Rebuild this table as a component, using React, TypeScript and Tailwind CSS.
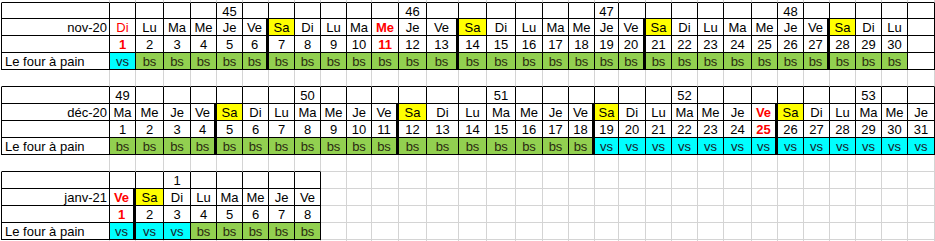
import React from 'react';

// Planning four à pain – nov 2020 / déc 2020 / janv 2021, rendu façon feuille Excel

const JOURS = ['Lu', 'Ma', 'Me', 'Je', 'Ve', 'Sa', 'Di'];

type Kind = 'blank' | 'week' | 'day' | 'num' | 'bs';

type Bloc = {
  mois: string;
  debut: number; // index dans JOURS du 1er du mois
  jours: number;
  span: number; // nb de colonnes après la colonne A
  semaines: Record<number, string>;
  rouges: number[];
  rougeFin?: number[]; // jour en rouge mais pas en gras (ligne des jours)
  statut: (d: number) => 'bs' | 'vs';
};

const NOV: Bloc = {
  mois: 'nov-20',
  debut: 6,
  jours: 30,
  span: 31,
  semaines: { 5: '45', 12: '46', 19: '47', 26: '48' },
  rouges: [1, 11],
  rougeFin: [1],
  statut: (d) => (d === 1 ? 'vs' : 'bs'),
};

const DEC: Bloc = {
  mois: 'déc-20',
  debut: 1,
  jours: 31,
  span: 31,
  semaines: { 1: '49', 8: '50', 15: '51', 22: '52', 29: '53' },
  rouges: [25],
  statut: (d) => (d <= 18 ? 'bs' : 'vs'),
};

const JAN: Bloc = {
  mois: 'janv-21',
  debut: 4,
  jours: 8,
  span: 8,
  semaines: { 3: '1' },
  rouges: [1],
  statut: (d) => (d <= 3 ? 'vs' : 'bs'),
};

type Ligne = { kind: Kind; bloc?: Bloc };

const LIGNES: Ligne[] = [
  { kind: 'blank' },
  { kind: 'week', bloc: NOV },
  { kind: 'day', bloc: NOV },
  { kind: 'num', bloc: NOV },
  { kind: 'bs', bloc: NOV },
  { kind: 'blank' },
  { kind: 'week', bloc: DEC },
  { kind: 'day', bloc: DEC },
  { kind: 'num', bloc: DEC },
  { kind: 'bs', bloc: DEC },
  { kind: 'blank' },
  { kind: 'week', bloc: JAN },
  { kind: 'day', bloc: JAN },
  { kind: 'num', bloc: JAN },
  { kind: 'bs', bloc: JAN },
  { kind: 'blank' },
];

const NB_COLS = 32;

const jourDe = (b: Bloc, c: number) => JOURS[(b.debut + c - 1) % 7];

const dansTable = (r: number, c: number) => {
  const l = LIGNES[r];
  return !!l && !!l.bloc && c <= l.bloc.span;
};

function Cellule({ r, c }: { r: number; c: number }) {
  const ligne = LIGNES[r];
  const b = ligne.bloc;
  const ici = dansTable(r, c);

  // bordures : chaque cellule dessine sa droite et son bas
  const epais =
    !!b &&
    ligne.kind !== 'week' &&
    c + 1 <= b.span &&
    c + 1 <= b.jours &&
    jourDe(b, c + 1) === 'Sa' &&
    c >= 1;
  const droiteNoire = ici || dansTable(r, c + 1);
  const basNoir = ici || dansTable(r + 1, c);

  const droite = epais
    ? 'border-r-[3px] border-r-black'
    : droiteNoire
      ? 'border-r border-r-black'
      : 'border-r border-r-[#d4d4d4]';
  const bas = basNoir ? 'border-b border-b-black' : 'border-b border-b-[#d4d4d4]';
  const gauche = c === 0 ? (ici ? 'border-l border-l-black' : 'border-l border-l-transparent') : '';

  let texte = '';
  let fond = 'bg-white';
  let couleur = 'text-black';
  let gras = '';
  let align = 'justify-center';

  if (b && ici) {
    const d = c;
    const jourValide = c >= 1 && d <= b.jours;
    if (c === 0) {
      if (ligne.kind === 'day') {
        texte = b.mois;
        align = 'justify-end pr-[2px]';
      } else if (ligne.kind === 'bs') {
        texte = 'Le four à pain';
        align = 'justify-start pl-[3px]';
      }
    } else if (jourValide) {
      const rouge = b.rouges.includes(d);
      if (ligne.kind === 'week') {
        texte = b.semaines[c] ?? '';
      } else if (ligne.kind === 'day') {
        texte = jourDe(b, c);
        if (texte === 'Sa') fond = 'bg-[#ffff00]';
        if (rouge) {
          couleur = 'text-[#ff0000]';
          if (!b.rougeFin?.includes(d)) gras = 'font-bold';
        }
      } else if (ligne.kind === 'num') {
        texte = String(d);
        if (rouge) {
          couleur = 'text-[#ff0000]';
          gras = 'font-bold';
        }
      } else if (ligne.kind === 'bs') {
        const s = b.statut(d);
        texte = s;
        if (s === 'bs') {
          fond = 'bg-[#92d050]';
          couleur = 'text-[#2a2a10]';
        } else {
          fond = 'bg-[#00ffff]';
          couleur = 'text-[#1a1a2a]';
        }
      }
    }
  }

  return (
    <div
      className={`flex items-center overflow-hidden whitespace-nowrap pt-px leading-[15px] ${align} ${droite} ${bas} ${gauche} ${fond} ${couleur} ${gras}`}
    >
      {texte}
    </div>
  );
}

export default function App() {
  return (
    <div
      className="h-[241px] w-[935px] overflow-hidden bg-white pl-px text-[13px]"
      style={{ fontFamily: '"Liberation Sans", Arial, sans-serif' }}
    >
      <div className="grid grid-cols-[109px_26px_28px_27px_26px_26px_26px_26px_26px_26px_25px_27px_28px_32px_28px_29px_27px_26px_26px_24px_27px_26px_26px_26px_28px_26px_26px_26px_26px_26px_26px_27px] grid-rows-[3px_16px_17px_17px_17px_17px_17px_17px_17px_17px_17px_17px_17px_17px_17px_17px]">
        {LIGNES.map((_, r) =>
          Array.from({ length: NB_COLS }, (_, c) => <Cellule key={`${r}-${c}`} r={r} c={c} />),
        )}
      </div>
    </div>
  );
}
